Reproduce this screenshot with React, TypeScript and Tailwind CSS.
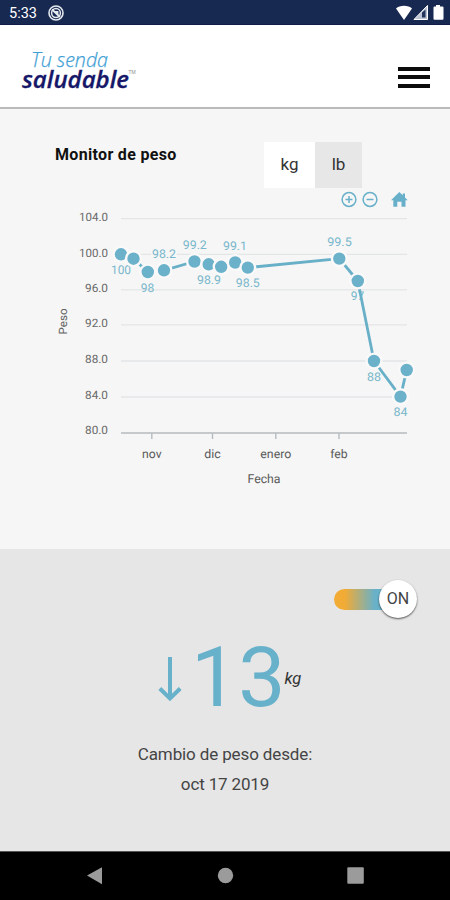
import React from 'react';

type Point = { x: number; y: number; label?: string; lx?: number; ly?: number; w?: number };

const points: Point[] = [
  { x: 121, y: 254.3, label: '100', lx: 121, ly: 274, w: 20 },
  { x: 133.5, y: 258.7 },
  { x: 147.8, y: 272, label: '98', lx: 147.5, ly: 291.5, w: 13.5 },
  { x: 164, y: 270.3, label: '98.2', lx: 164, ly: 258, w: 24 },
  { x: 194.5, y: 261.5, label: '99.2', lx: 194.8, ly: 248.5, w: 24 },
  { x: 208.7, y: 264.3, label: '98.9', lx: 209, ly: 283.5, w: 24 },
  { x: 221.2, y: 266.8 },
  { x: 235.2, y: 262.5, label: '99.1', lx: 235, ly: 249.5, w: 24 },
  { x: 247.8, y: 267.6, label: '98.5', lx: 247.8, ly: 287, w: 24 },
  { x: 339.3, y: 258.6, label: '99.5', lx: 339.5, ly: 246.3, w: 24.5 },
  { x: 357.8, y: 281, label: '97', lx: 357.5, ly: 300.3, w: 13.5 },
  { x: 374, y: 361, label: '88', lx: 374, ly: 380.7, w: 14 },
  { x: 400.5, y: 396.6, label: '84', lx: 400.5, ly: 416.2, w: 14 },
  { x: 406.7, y: 370 },
];

const gridRows = [
  { y: 218.6, text: '104.0', base: 220.5 },
  { y: 254.3, text: '100.0', base: 256.7 },
  { y: 289.8, text: '96.0', base: 292 },
  { y: 324.8, text: '92.0', base: 327.3 },
  { y: 361, text: '88.0', base: 363 },
  { y: 397, text: '84.0', base: 399 },
  { y: 0, text: '80.0', base: 434.3 },
];

const months = [
  { x: 151.8, text: 'nov', w: 19.5 },
  { x: 212.5, text: 'dic', w: 16.5 },
  { x: 275.8, text: 'enero', w: 31 },
  { x: 339, text: 'feb', w: 17.5 },
];

function Chart() {
  const segments = points.slice(1).map((p, i) => ({ a: points[i], b: p }));
  return (
    <svg className="block h-[339px] w-[450px]" viewBox="0 210 450 339" fontFamily='Roboto, "Liberation Sans", sans-serif' textRendering="geometricPrecision">
      {gridRows.slice(0, 6).map((r) => (
        <line key={r.text} x1="121" x2="407" y1={r.y} y2={r.y} stroke="#e3e5e6" strokeWidth="1.3" />
      ))}
      {gridRows.map((r) => (
        <text key={r.text} x="108" y={r.base} fontSize="11.5" fill="#686868" textAnchor="end" textLength={r.text.length === 5 ? 29 : 23} lengthAdjust="spacingAndGlyphs">
          {r.text}
        </text>
      ))}
      <line x1="121" x2="407" y1="433" y2="433" stroke="#c5c9cb" strokeWidth="2.2" />
      {months.map((m) => (
        <g key={m.text}>
          <line x1={m.x} x2={m.x} y1="433" y2="439" stroke="#b4bcc2" strokeWidth="1.4" />
          <text x={m.x} y="457.7" fontSize="12" fill="#5a5a5a" textAnchor="middle" textLength={m.w} lengthAdjust="spacingAndGlyphs">{m.text}</text>
        </g>
      ))}
      <text x="264" y="483.2" fontSize="12.3" fill="#5a5a5a" textAnchor="middle" textLength="33" lengthAdjust="spacingAndGlyphs">Fecha</text>
      <text transform="translate(67 321.5) rotate(-90)" fontSize="11.5" fill="#606060" textAnchor="middle" textLength="26" lengthAdjust="spacingAndGlyphs">Peso</text>
      {points.filter((p) => p.label).map((p) => (
        <g key={p.label}>
          {p.label === '98.2' && <rect x="151" y="249" width="26" height="10" fill="#f6f6f6" />}
          <text x={p.lx} y={p.ly} fontSize="12" fill="#77b7cb" textAnchor="middle" textLength={p.w} lengthAdjust="spacingAndGlyphs">{p.label}</text>
        </g>
      ))}
      {segments.map((s, i) => (
        <line key={i} x1={s.a.x} y1={s.a.y} x2={s.b.x} y2={s.b.y} stroke="#68afc8" strokeWidth="2.8" />
      ))}
      {points.map((p) => (
        <circle key={p.x} cx={p.x} cy={p.y} r="7.4" fill="#6bb1ca" stroke="#f9f9f9" strokeWidth="2.4" />
      ))}
    </svg>
  );
}

function StatusBar() {
  return (
    <div className="flex h-[25px] items-center border-b border-[#101d45] bg-[#172951] pl-[9px] pr-[6px] text-white">
      <span className="w-[39px] pt-[2px] text-[14.5px] leading-[25px]">5:33</span>
      <svg className="mt-[2px] h-4 w-4" viewBox="0 0 16 16" fill="none" stroke="#e5e8ee">
        <circle cx="8" cy="8" r="7" strokeWidth="1.6" />
        <circle cx="8" cy="8" r="4.4" strokeWidth="1.5" />
        <path d="M4 4.5 12 12M7 7h2.5v3" strokeWidth="1.8" />
      </svg>
      <svg className="ml-auto mt-px h-[17px] w-12" viewBox="396 4 48 17" fill="#fff">
        <path d="M396 8.5C399.5 4.8 408.5 4.8 412 8.5L404 20Z" />
        <path d="M427.5 5.5V19.5H414Z" fill="#bcc4d4" stroke="#fff" strokeWidth="1" />
        <path d="M422 12.5 425.5 9.5V17.5H422Z" fill="#24355d" />
        <path d="M436 5h4v1.5h2.5a1 1 0 0 1 1 1V18.7a1 1 0 0 1-1 1H434.5a1 1 0 0 1-1-1V7.5a1 1 0 0 1 1-1H436Z" />
      </svg>
    </div>
  );
}

function Header() {
  return (
    <header className="flex h-[84px] items-start justify-between border-b-2 border-[#bababa] bg-white pr-5">
      <svg className="h-[82px] w-[150px]" viewBox="0 25 150 82" fontFamily='"Open Sans", "Noto Sans", sans-serif' fontStyle="italic">
        <text x="31" y="67" fontSize="19.5" fontWeight="300" fill="#3f9fd5" stroke="#3f9fd5" strokeWidth="0.25" textLength="77" lengthAdjust="spacingAndGlyphs">Tu senda</text>
        <text x="22" y="88" fontSize="23" fontWeight="600" fill="#161768" stroke="#161768" strokeWidth="0.3" textLength="107" lengthAdjust="spacingAndGlyphs">saludable</text>
        <text x="128.5" y="74" fontSize="5" fill="#888" fontStyle="normal">TM</text>
      </svg>
      <div className="mt-[42px] flex w-[32px] flex-col gap-[4.4px]">
        <div className="h-[4px] bg-[#0c0c0c]" />
        <div className="h-[4px] bg-[#0c0c0c]" />
        <div className="h-[4px] bg-[#0c0c0c]" />
      </div>
    </header>
  );
}

export default function App() {
  return (
    <div className="flex h-[900px] w-[450px] flex-col overflow-hidden bg-[#f6f6f6] font-['Roboto','Liberation_Sans',sans-serif]">
      <StatusBar />
      <Header />
      <main className="h-[440px] shrink-0">
        <div className="flex h-[79px] pl-[55px] pt-[33px]">
          <h1 className="w-[209px] whitespace-nowrap pt-[1px] text-[16px] font-bold leading-6 tracking-[0.32px] text-[#111]">Monitor de peso</h1>
          <div className="flex h-[46px] text-[17px] text-[#333]">
            <div className="flex w-[51px] items-center justify-center bg-white">kg</div>
            <div className="flex w-[47px] items-center justify-center bg-[#e7e7e7]">lb</div>
          </div>
        </div>
        <div className="flex h-[22px] items-start pl-[341px]">
          <svg className="mt-[3px] h-[17px] w-[69px]" viewBox="341 191 69 17" fill="none" stroke="#68b0c9" strokeWidth="1.5">
            <circle cx="349" cy="199.5" r="6.9" />
            <path d="M345.5 199.5h7M349 196v7" />
            <circle cx="370" cy="199.5" r="6.9" />
            <path d="M366.5 199.5h7" />
            <path d="M391 200.2 399.3 192 402.8 195.300V193.500h2.200v4L407.700 200.200H405.500V206.800H401.500V201.800H397.300V206.800H393.300V200.200Z" fill="#68b0c9" stroke="none" />
          </svg>
        </div>
        <Chart />
      </main>
      <section className="h-[302px] shrink-0 bg-[#e6e6e6] pt-[31px] text-[#444]">
        <div className="flex h-[38px] items-center pl-[334px]">
          <div className="h-[21px] w-[60px] rounded-full bg-[linear-gradient(90deg,#f2ab35_18%,#68b1c9_68%)]" />
          <div className="-ml-[15px] flex h-[38px] w-[38px] items-center justify-center rounded-full bg-white text-[16px] text-[#444] shadow-[0_1px_2px_rgba(0,0,0,0.65)]">ON</div>
        </div>
        <div className="flex h-[106px] items-start pl-[158px] pt-[12px]">
          <svg className="mt-[26px] h-[46px] w-[24px]" viewBox="158 656 24 46" fill="none" stroke="#68b1cb" strokeWidth="4">
            <path d="M170 657V698M159.8 688.5 170 698.500 180.200 688.500" />
          </svg>
          <span className="ml-[9px] text-[84px] leading-[96px] text-[#68b1cb]">13</span>
          <span className="-ml-px mt-[37px] text-[16.5px] italic leading-6 text-[#333]">kg</span>
        </div>
        <div className="pt-[16px] text-center text-[17px] leading-[29px]">
          <p className="tracking-[-0.12px]">Cambio de peso desde:</p>
          <p className="pt-px tracking-[-0.15px]">oct 17 2019</p>
        </div>
      </section>
      <nav className="flex h-[49px] shrink-0 items-center border-t border-[#555] bg-black">
        <svg className="h-[48px] w-[450px]" viewBox="0 852 450 48" fill="#9b9b9b">
          <path d="M87 875.5 102 867.3V884.3Z" />
          <circle cx="225.5" cy="875.5" r="7.7" />
          <rect x="347.3" y="867.3" width="16.5" height="16.5" rx="1" />
        </svg>
      </nav>
    </div>
  );
}
